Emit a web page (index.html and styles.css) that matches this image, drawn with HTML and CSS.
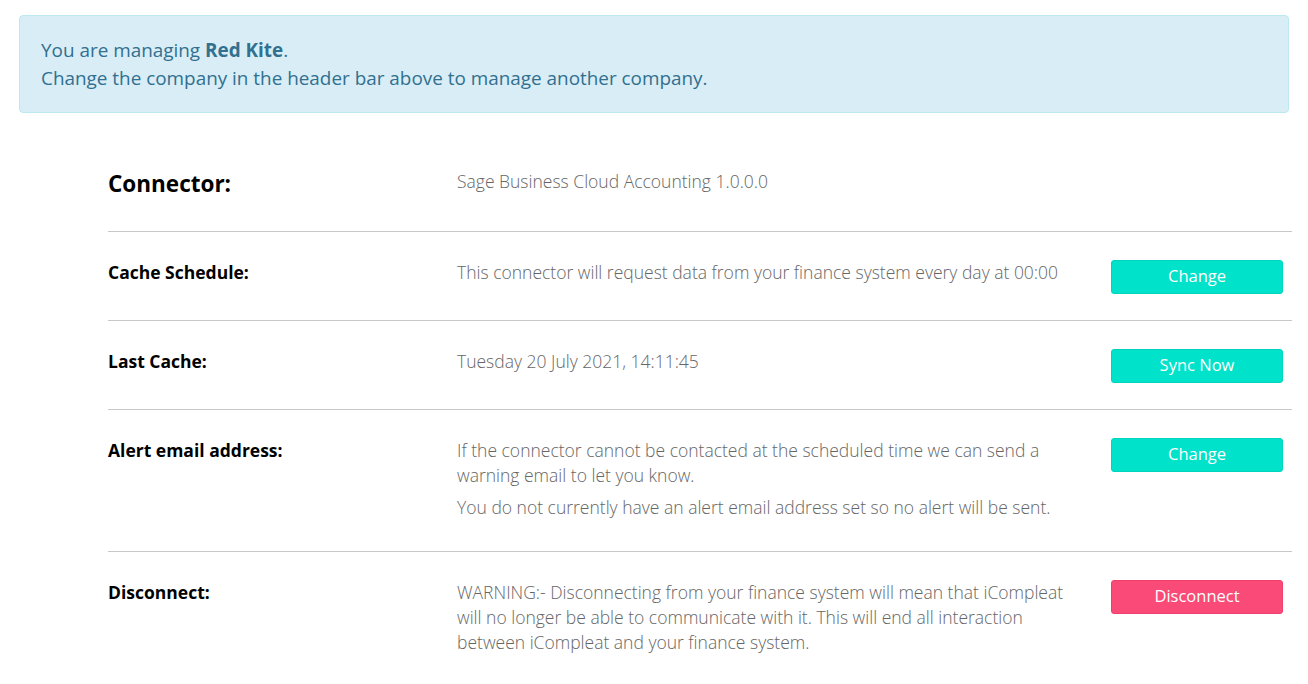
FILE: index.html
```html
<!DOCTYPE html>
<html>
<head>
<meta charset="utf-8">
<link rel="stylesheet" href="styles.css">
</head>
<body>
<div class="alert">
  You are managing <strong>Red Kite</strong>.<br>
  Change the company in the header bar above to manage another company.
</div>
<div class="settings">
  <div class="row row-head">
    <div class="label label-lg">Connector:</div>
    <div class="value"><p>Sage Business Cloud Accounting 1.0.0.0</p></div>
    <div class="action"></div>
  </div>
  <div class="row">
    <div class="label">Cache Schedule:</div>
    <div class="value"><p>This connector will request data from your finance system every day at 00:00</p></div>
    <div class="action"><button class="btn btn-teal">Change</button></div>
  </div>
  <div class="row">
    <div class="label">Last Cache:</div>
    <div class="value"><p>Tuesday 20 July 2021, 14:11:45</p></div>
    <div class="action"><button class="btn btn-teal">Sync Now</button></div>
  </div>
  <div class="row">
    <div class="label">Alert email address:</div>
    <div class="value">
      <p>If the connector cannot be contacted at the scheduled time we can send a warning email to let you know.</p>
      <p>You do not currently have an alert email address set so no alert will be sent.</p>
    </div>
    <div class="action"><button class="btn btn-teal">Change</button></div>
  </div>
  <div class="row">
    <div class="label">Disconnect:</div>
    <div class="value"><p>WARNING:- Disconnecting from your finance system will mean that iCompleat will no longer be able to communicate with it. This will end all interaction between iCompleat and your finance system.</p></div>
    <div class="action"><button class="btn btn-pink">Disconnect</button></div>
  </div>
</div>
</body>
</html>
```
FILE: styles.css
```css
html, body {
  margin: 0;
  background: #fff;
}
body {
  padding: 15px 19px 0;
  font-family: "Open Sans", "Liberation Sans", sans-serif;
  color: #000;
}
.alert {
  background: #d9edf7;
  border: 1px solid #bce8f1;
  border-radius: 4px;
  color: #31708f;
  font-size: 18.9px;
  line-height: 28px;
  padding: 20px 21px 20px 21px;
}
.alert strong {
  font-weight: 700;
}
.settings {
  margin: 28px -3px 0 89px;
}
.row {
  display: grid;
  grid-template-columns: 349px 1fr 172px;
  align-items: start;
  padding: 28px 9px 26px 0;
  border-top: 1px solid #c8c8c8;
}
.row-head {
  border-top: none;
  padding-bottom: 28px;
}
.label {
  font-weight: 700;
  font-size: 17.5px;
  line-height: 25px;
}
.label-lg {
  font-size: 22.5px;
  line-height: 30px;
}
.value {
  font-weight: 300;
  font-size: 17.5px;
  line-height: 25px;
  color: #666;
  padding-right: 30px;
}
.value p {
  margin: 0 0 7px;
}
.value p:last-child {
  margin-bottom: 5px;
}
.action {
  min-height: 34px;
}
.btn {
  display: block;
  width: 172px;
  height: 34px;
  border-radius: 3px;
  font-family: "Open Sans", "Liberation Sans", sans-serif;
  font-size: 16.5px;
  line-height: 30px;
  color: #fff;
  cursor: pointer;
  padding: 0 0 2px;
}
.btn-teal {
  background: #00e2ca;
  border: 1px solid #00d4bd;
}
.btn-pink {
  background: #f94a78;
  border: 1px solid #ee3f6d;
}
```
